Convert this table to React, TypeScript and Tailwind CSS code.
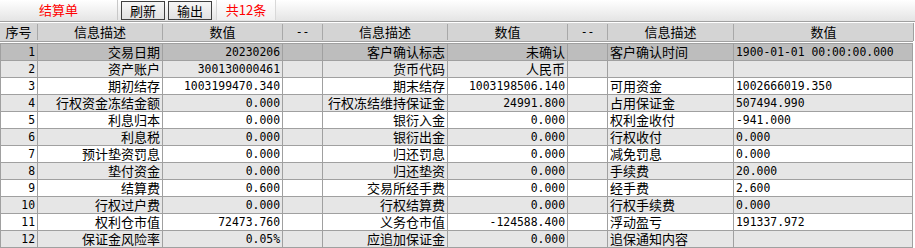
import * as React from 'react'

const cols = [38, 125, 120, 40, 125, 120, 40, 126, 180]
const heads = ['序号', '信息描述', '数值', '--', '信息描述', '数值', '--', '信息描述', '数值']

// [desc1, val1, desc2, val2, desc3, val3]
const rows: string[][] = [
  ['交易日期', '20230206', '客户确认标志', '未确认', '客户确认时间', '1900-01-01 00:00:00.000'],
  ['资产账户', '300130000461', '货币代码', '人民币', '', ''],
  ['期初结存', '1003199470.340', '期末结存', '1003198506.140', '可用资金', '1002666019.350'],
  ['行权资金冻结金额', '0.000', '行权冻结维持保证金', '24991.800', '占用保证金', '507494.990'],
  ['利息归本', '0.000', '银衍入金', '0.000', '权利金收付', '-941.000'],
  ['利息税', '0.000', '银衍出金', '0.000', '行权收付', '0.000'],
  ['预计垫资罚息', '0.000', '归还罚息', '0.000', '减免罚息', '0.000'],
  ['垫付资金', '0.000', '归还垫资', '0.000', '手续费', '20.000'],
  ['结算费', '0.600', '交易所经手费', '0.000', '经手费', '2.600'],
  ['行权过户费', '0.000', '行权结算费', '0.000', '行权手续费', '0.000'],
  ['权利仓市值', '72473.760', '义务仓市值', '-124588.400', '浮动盈亏', '191337.972'],
  ['保证金风险率', '0.05%', '应追加保证金', '0.000', '追保通知内容', ''],
]

const isAscii = (s: string) => /^[\x00-\x7f]*$/.test(s)

function Txt({ s }: { s: string }) {
  if (isAscii(s))
    return (
      <span className="block text-[11.4px] leading-[16px]" style={{ fontFamily: '"DejaVu Sans Mono", monospace' }}>
        {s}
      </span>
    )
  return <span className="block text-[13px] leading-[16px]">{s}</span>
}

function Cell({ w, s, align, last }: { w: number; s: string; align: 'r' | 'l'; last?: boolean }) {
  return (
    <div
      className={`flex h-full shrink-0 items-center overflow-hidden whitespace-nowrap px-[2px] ${last ? '' : 'border-r border-[#a0a0a0]'} ${align === 'r' ? 'justify-end' : 'justify-start'}`}
      style={{ width: w }}
    >
      <Txt s={s} />
    </div>
  )
}

export default function App() {
  return (
    <div
      className="h-[248px] w-[915px] overflow-hidden bg-white text-black"
      style={{ fontFamily: '"Noto Sans CJK SC", sans-serif' }}
    >
      <div className="flex h-[22px] items-stretch gap-[3px] border-b border-[#a0a0a0] bg-gradient-to-b from-[#ffffff] to-[#e4e4e4] pb-[1px] text-[13px] leading-[20px]">
        <div className="w-[118px] border-r border-[#c8c8c8] text-center text-[#ff0000]">结算单</div>
        <div className="mt-[1px] w-[44px] border border-[#404040] bg-gradient-to-b from-[#f6f6f6] to-[#e2e2e2] text-center leading-[18px]">刷新</div>
        <div className="mt-[1px] w-[44px] border border-[#404040] bg-gradient-to-b from-[#f6f6f6] to-[#e2e2e2] text-center leading-[18px]">输出</div>
        <div className="ml-[1px] w-[60px] border-x border-[#d8d8d8] bg-white/40 text-center text-[#ff0000]">共12条</div>
      </div>

      <div className="mt-[1px] w-[913px] border-b border-[#a0a0a0]">
        <div className="flex h-[18px] bg-[#d4d4d4]">
          {heads.map((h, i) => (
            <div
              key={i}
              className={`h-full shrink-0 ${i === heads.length - 1 ? 'border-r border-[#a0a0a0]' : ''}`}
              style={{ width: cols[i] }}
            >
              <div
                className={`mt-[1px] flex h-[16px] items-center justify-center ${i < heads.length - 1 ? 'border-r border-[#a8a8a8]' : ''}`}
              >
                <Txt s={h} />
              </div>
            </div>
          ))}
        </div>
      </div>

      <div className="mt-[1px] w-[913px] border-t border-[#a0a0a0]">
        {rows.map((r, i) => {
          const bg = i === 0 ? 'bg-[#bdbdbd]' : i % 2 === 1 ? 'bg-[#e6e6e6]' : 'bg-white'
          return (
            <div key={i} className={`flex h-[17px] border-x border-b border-[#a0a0a0] ${bg}`}>
              <Cell w={cols[0] - 1} s={String(i + 1)} align="r" />
              <Cell w={cols[1]} s={r[0]} align="r" />
              <Cell w={cols[2]} s={r[1]} align="r" />
              <Cell w={cols[3]} s="" align="r" />
              <Cell w={cols[4]} s={r[2]} align="r" />
              <Cell w={cols[5]} s={r[3]} align="r" />
              <Cell w={cols[6]} s="" align="r" />
              <Cell w={cols[7]} s={r[4]} align="l" />
              <Cell w={cols[8] - 2} s={r[5]} align="l" last />
            </div>
          )
        })}
      </div>
    </div>
  )
}
